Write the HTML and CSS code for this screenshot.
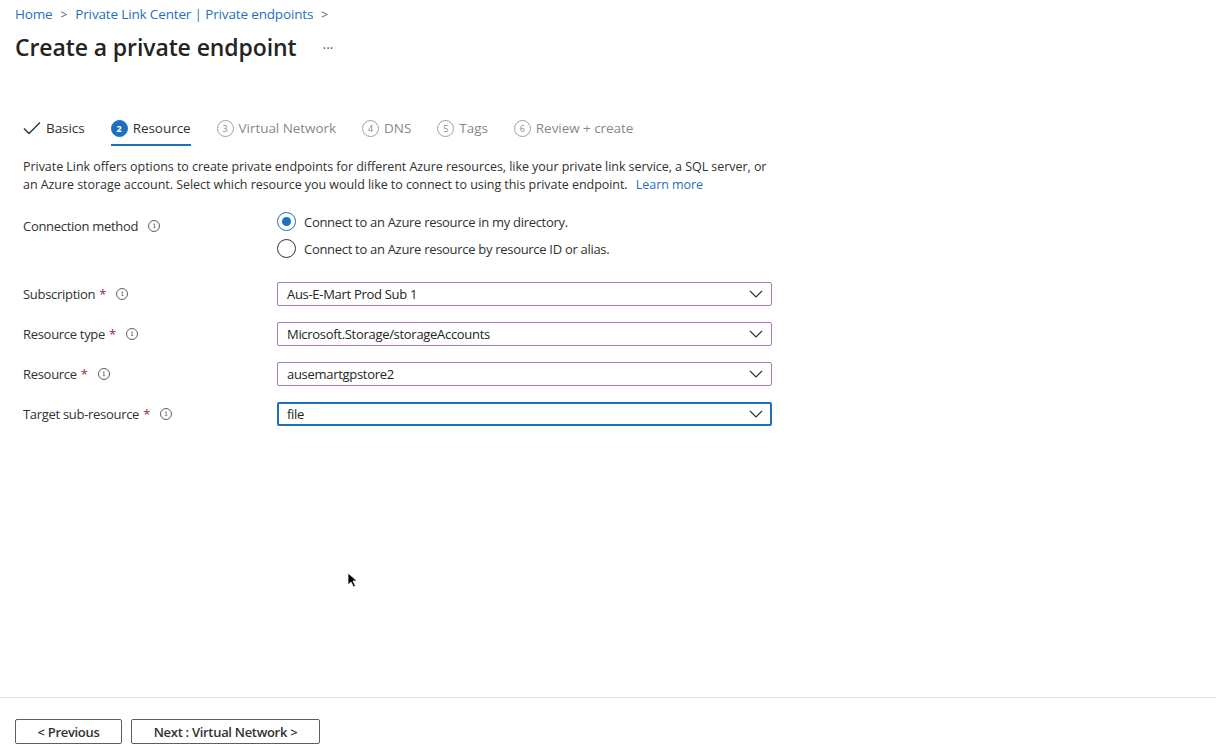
FILE: index.html
```html
<!DOCTYPE html>
<html>
<head>
<meta charset="utf-8">
<link rel="stylesheet" href="styles.css">
</head>
<body>
<div class="page">
  <header class="head">
    <nav class="crumbs">
      <a class="crumb">Home</a>
      <span class="sep">&gt;</span>
      <a class="crumb">Private Link Center | Private endpoints</a>
      <span class="sep">&gt;</span>
    </nav>
    <div class="title-row">
      <h1 class="title">Create a private endpoint</h1>
      <span class="more">···</span>
    </div>
  </header>

  <main class="content">
    <div class="tabs">
      <div class="tab done">
        <svg class="check" width="18" height="14" viewBox="0 0 18 14"><path d="M1 7.5 L6 12.5 L17 1.5" fill="none" stroke="#323130" stroke-width="1.4"/></svg>
        <span>Basics</span>
      </div>
      <div class="tab active">
        <span class="num filled">2</span>
        <span>Resource</span>
      </div>
      <div class="tab">
        <span class="num">3</span>
        <span>Virtual Network</span>
      </div>
      <div class="tab">
        <span class="num">4</span>
        <span>DNS</span>
      </div>
      <div class="tab">
        <span class="num">5</span>
        <span>Tags</span>
      </div>
      <div class="tab">
        <span class="num">6</span>
        <span>Review + create</span>
      </div>
    </div>

    <p class="intro">Private Link offers options to create private endpoints for different Azure resources, like your private link service, a SQL server, or an Azure storage account. Select which resource you would like to connect to using this private endpoint. <a class="link">Learn more</a></p>

    <div class="form">
      <div class="row radio-row">
        <div class="label">Connection method <span class="info">i</span></div>
        <div class="radios">
          <label class="radio"><span class="dot checked"></span>Connect to an Azure resource in my directory.</label>
          <label class="radio"><span class="dot"></span>Connect to an Azure resource by resource ID or alias.</label>
        </div>
      </div>

      <div class="row">
        <div class="label">Subscription <span class="req">*</span> <span class="info">i</span></div>
        <div class="select"><span>Aus-E-Mart Prod Sub 1</span><svg class="chev" width="14" height="8" viewBox="0 0 14 8"><path d="M1 1 L7 7 L13 1" fill="none" stroke="#323130" stroke-width="1.2"/></svg></div>
      </div>
      <div class="row">
        <div class="label">Resource type <span class="req">*</span> <span class="info">i</span></div>
        <div class="select"><span>Microsoft.Storage/storageAccounts</span><svg class="chev" width="14" height="8" viewBox="0 0 14 8"><path d="M1 1 L7 7 L13 1" fill="none" stroke="#323130" stroke-width="1.2"/></svg></div>
      </div>
      <div class="row">
        <div class="label">Resource <span class="req">*</span> <span class="info">i</span></div>
        <div class="select"><span>ausemartgpstore2</span><svg class="chev" width="14" height="8" viewBox="0 0 14 8"><path d="M1 1 L7 7 L13 1" fill="none" stroke="#323130" stroke-width="1.2"/></svg></div>
      </div>
      <div class="row">
        <div class="label">Target sub-resource <span class="req">*</span> <span class="info">i</span></div>
        <div class="select focus"><span>file</span><svg class="chev" width="14" height="8" viewBox="0 0 14 8"><path d="M1 1 L7 7 L13 1" fill="none" stroke="#323130" stroke-width="1.2"/></svg></div>
      </div>
    </div>
  </main>

  <footer class="foot">
    <button class="btn prev">&lt; Previous</button>
    <button class="btn next">Next : Virtual Network &gt;</button>
  </footer>
</div>
<svg class="cursor" width="12" height="16" viewBox="0 0 12 16"><path d="M1 1 L1 13 L4 10 L6.5 15 L8.5 14 L6 9 L10 9 Z" fill="#000" stroke="#fff" stroke-width="0.8"/></svg>
</body>
</html>
```

FILE: styles.css
```css
* { box-sizing: border-box; }
html, body { margin: 0; padding: 0; background: #fff; }
body {
  font-family: "Open Sans", "Noto Sans", "Liberation Sans", sans-serif;
  color: #323130;
  width: 1216px;
  height: 756px;
  overflow: hidden;
  position: relative;
}
.page {
  display: flex;
  flex-direction: column;
  height: 756px;
}
.head { padding: 4px 15px 0 15px; }
.crumbs {
  display: flex;
  align-items: center;
  gap: 8px;
  font-size: 13.5px;
  height: 20px;
  letter-spacing: -0.15px;
}
.crumb { color: #1f6fc1; }
.sep { color: #605e5c; font-size: 12px; }
.title-row {
  display: flex;
  align-items: center;
  margin-top: 7px;
  height: 32px;
}
.title {
  margin: 0;
  font-size: 23px;
  font-weight: 600;
  color: #242424;
  letter-spacing: -0.1px;
}
.more { margin-left: 26px; font-size: 14px; color: #605e5c; letter-spacing: 0; }

.content { padding: 0 23px; flex: 1; }
.tabs {
  display: flex;
  align-items: center;
  gap: 26px;
  margin-top: 50px;
  height: 30px;
  font-size: 13.5px;
  letter-spacing: -0.05px;
}
.tab {
  display: flex;
  align-items: center;
  gap: 5px;
  height: 30px;
  color: #8a8886;
  position: relative;
}
.tab.done, .tab.active { color: #323130; }
.tab.active::after {
  content: "";
  position: absolute;
  left: 0;
  right: 0;
  bottom: -3px;
  height: 2px;
  background: #1f6fc1;
}
.check { display: block; }
.num {
  width: 17px; height: 17px;
  border-radius: 50%;
  border: 1px solid #a19f9d;
  font-size: 9px;
  display: flex; align-items: center; justify-content: center;
  color: #8a8886;
  letter-spacing: 0;
}
.num.filled { background: #1f6fc1; border-color: #1f6fc1; color: #fff; font-weight: 700; }

.intro {
  margin: 15px 0 0 0;
  width: 755px;
  font-size: 12.5px;
  line-height: 18px;
  letter-spacing: -0.05px;
  color: #323130;
}
.link { color: #1f6fc1; margin-left: 5px; }

.form { margin-top: 16px; }
.row {
  display: flex;
  align-items: center;
  height: 40px;
}
.radio-row { align-items: flex-start; height: 64px; }
.label {
  width: 254px;
  font-size: 13px;
  letter-spacing: -0.3px;
  display: flex;
  align-items: center;
  gap: 4px;
}
.radio-row .label { margin-top: 7px; }
.req { color: #a4262c; }
.info {
  width: 12px; height: 12px; border-radius: 50%;
  border: 1px solid #605e5c;
  font-size: 8px; line-height: 10px; text-align: center;
  color: #605e5c; margin-left: 6px;
  font-family: "DejaVu Serif", serif;
}
.radios { display: flex; flex-direction: column; gap: 8px; padding-top: 2px; }
.radio {
  display: flex; align-items: center; gap: 8px;
  font-size: 13px; letter-spacing: -0.3px; height: 19px;
}
.dot {
  width: 19px; height: 19px; border-radius: 50%;
  border: 1px solid #323130; display: inline-block; position: relative;
}
.dot.checked { border-color: #1f6fc1; }
.dot.checked::after {
  content: ""; position: absolute; left: 4px; top: 4px;
  width: 9px; height: 9px; border-radius: 50%; background: #1f6fc1;
}
.select {
  width: 495px; height: 24px;
  border: 1px solid #a77dbd;
  border-radius: 2px;
  display: flex; align-items: center; justify-content: space-between;
  padding: 0 8px 0 9px;
  font-size: 13px; letter-spacing: -0.3px;
  color: #242424;
}
.select.focus { border: 2px solid #1f6fc1; padding-left: 8px; padding-right: 7px; }

.foot {
  border-top: 1px solid #e1dfdd;
  height: 59px;
  display: flex;
  align-items: flex-start;
  gap: 9px;
  padding: 21px 15px 0 15px;
}
.btn {
  height: 25px;
  background: #fff;
  border: 1px solid #605e5c;
  border-radius: 2px;
  font-family: inherit;
  font-size: 13px;
  font-weight: 600;
  color: #323130;
  letter-spacing: -0.3px;
  padding: 0;
}
.prev { width: 107px; }
.next { width: 189px; }
.cursor { position: absolute; left: 347px; top: 572px; }
```
